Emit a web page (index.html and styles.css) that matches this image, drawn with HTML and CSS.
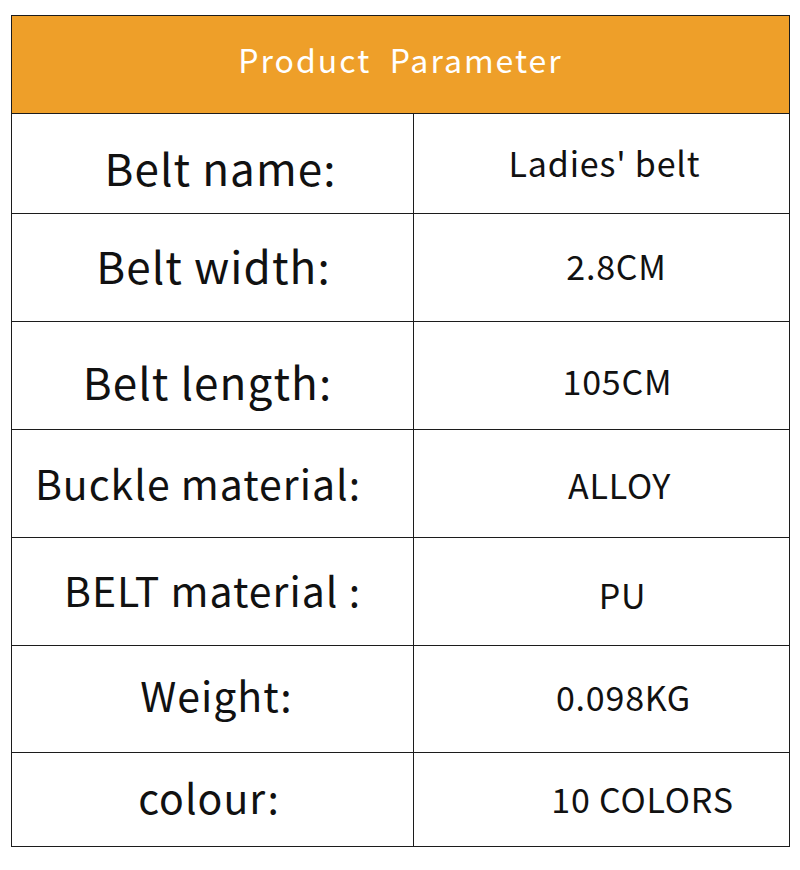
FILE: index.html
```html
<!DOCTYPE html>
<html>
<head>
<meta charset="utf-8">
<link rel="stylesheet" href="styles.css">
</head>
<body>
<div class="table">
  <div class="head">Product&nbsp; Parameter</div>
  <div class="row row1">
    <div class="key">Belt name:</div>
    <div class="val">Ladies' belt</div>
  </div>
  <div class="row row2">
    <div class="key">Belt width:</div>
    <div class="val">2.8CM</div>
  </div>
  <div class="row row3">
    <div class="key">Belt length:</div>
    <div class="val">105CM</div>
  </div>
  <div class="row row4">
    <div class="key small">Buckle material:</div>
    <div class="val">ALLOY</div>
  </div>
  <div class="row row5">
    <div class="key small">BELT material :</div>
    <div class="val">PU</div>
  </div>
  <div class="row row6">
    <div class="key small">Weight:</div>
    <div class="val">0.098KG</div>
  </div>
  <div class="row row7">
    <div class="key small">colour:</div>
    <div class="val">10 COLORS</div>
  </div>
</div>
</body>
</html>
```
FILE: styles.css
```css
*{box-sizing:border-box}
body{margin:0;background:#fff;font-family:"Noto Sans CJK SC","Noto Sans",sans-serif;color:#111}
.table{margin:15px 0 0 11px;width:779px;border:1px solid #1c1c1c}
.head{height:97px;background:#ee9f29;color:#fff;font-size:32px;letter-spacing:2px;display:flex;align-items:center;justify-content:center;padding-bottom:12px;white-space:nowrap}
.row{display:grid;grid-template-columns:402px 1fr;border-top:1px solid #1c1c1c}
.key,.val{display:flex;align-items:center;justify-content:center;white-space:nowrap}
.key{border-right:1px solid #1c1c1c;font-size:44px;letter-spacing:1.1px}
.key.small{font-size:41px;letter-spacing:1px}
.val{font-size:34px;letter-spacing:0.8px}
.row1{height:100px}
.row2,.row3,.row4,.row5{height:108px}
.row6{height:107px}
.row7{height:94px}
.row1 .key{padding:6px 0 0 16px}
.row1 .val{padding:0 0 3px 6px}
.row2 .key{padding:0 0 6px 2px}
.row2 .val{padding:0 0 5px 30px}
.row3 .key{padding:11px 10px 0 0}
.row3 .val{padding:9px 0 0 32px}
.row4 .key{padding:0 29px 4px 0}
.row4 .val{padding:1px 0 0 36px}
.row5 .key{padding:0 0 6px 0}
.row5 .val{padding:5px 0 0 42px}
.row6 .key{padding:0 0 11px 8px}
.row6 .val{padding:0 0 5px 44px}
.row7 .key{padding:0 7px 8px 0}
.row7 .val{padding:0 0 3px 82px}
```
